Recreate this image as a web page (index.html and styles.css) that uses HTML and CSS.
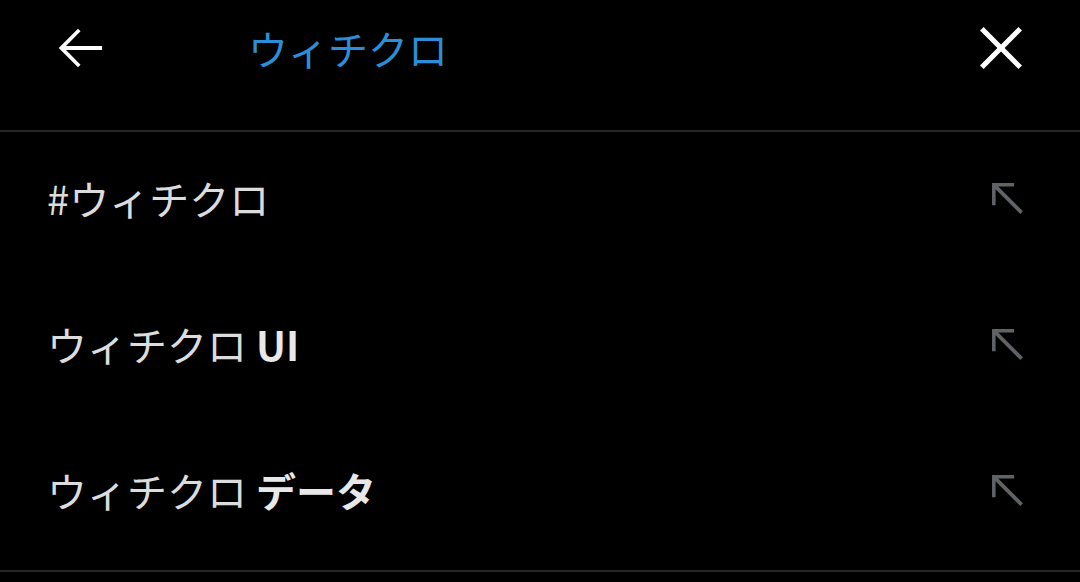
FILE: index.html
```html
<!DOCTYPE html>
<html lang="ja">
<head>
    <meta charset="UTF-8">
    <meta name="viewport" content="width=device-width, initial-scale=1.0">
    <title>検索</title>
    <link rel="stylesheet" href="styles.css">
</head>
<body>
    <div class="search-header">
        <button class="icon-btn back-btn" aria-label="戻る">
            <svg width="66" height="66" viewBox="0 0 24 24"><path d="M20 11.25H6.9l5.3-5.3-0.95-0.95L4.25 12l7 7 0.95-0.95-5.3-5.3H20z" fill="#fff"/></svg>
        </button>
        <div class="search-query">ウィチクロ</div>
        <button class="icon-btn close-btn" aria-label="クリア">
            <svg width="72" height="72" viewBox="0 0 24 24"><path d="M19 6.2L17.8 5 12 10.8 6.2 5 5 6.2 10.8 12 5 17.8 6.2 19 12 13.2 17.8 19 19 17.8 13.2 12z" fill="#fff"/></svg>
        </button>
    </div>

    <ul class="suggestions">
        <li class="suggestion">
            <span class="suggestion-text">#ウィチクロ</span>
            <svg class="fill-icon" width="53" height="53" viewBox="0 0 24 24"><path d="M19 17.8L17.8 19 6.6 7.8V15H5V5h10v1.6H7.8z" fill="#5f6266"/></svg>
        </li>
        <li class="suggestion">
            <span class="suggestion-text">ウィチクロ <b>UI</b></span>
            <svg class="fill-icon" width="53" height="53" viewBox="0 0 24 24"><path d="M19 17.8L17.8 19 6.6 7.8V15H5V5h10v1.6H7.8z" fill="#5f6266"/></svg>
        </li>
        <li class="suggestion">
            <span class="suggestion-text">ウィチクロ <b>データ</b></span>
            <svg class="fill-icon" width="53" height="53" viewBox="0 0 24 24"><path d="M19 17.8L17.8 19 6.6 7.8V15H5V5h10v1.6H7.8z" fill="#5f6266"/></svg>
        </li>
    </ul>
</body>
</html>
```

FILE: styles.css
```css
body {
    margin: 0;
    padding: 0;
    background: #000;
    font-family: "Noto Sans CJK JP", "Noto Sans", sans-serif;
    height: 582px;
    overflow: hidden;
}
.search-header {
    display: flex;
    align-items: center;
    height: 96px;
    padding: 0 43px 34px 47px;
    border-bottom: 2px solid #262626;
}
.icon-btn {
    background: none;
    border: none;
    padding: 0;
    display: flex;
    cursor: pointer;
}
.search-query {
    flex: 1;
    margin-left: 135px;
    color: #2a8fd8;
    font-size: 40px;
    line-height: 1;
}
.suggestions {
    list-style: none;
    margin: 0;
    padding: 0;
    border-bottom: 2px solid #262626;
}
.suggestion {
    display: flex;
    align-items: center;
    justify-content: space-between;
    height: 132px;
    padding: 0 46px 14px 47px;
}
.suggestion-text {
    color: #dcdcdc;
    font-size: 40px;
    line-height: 1;
}
.suggestion-text b {
    color: #e8e8e8;
    font-weight: 700;
}
```
